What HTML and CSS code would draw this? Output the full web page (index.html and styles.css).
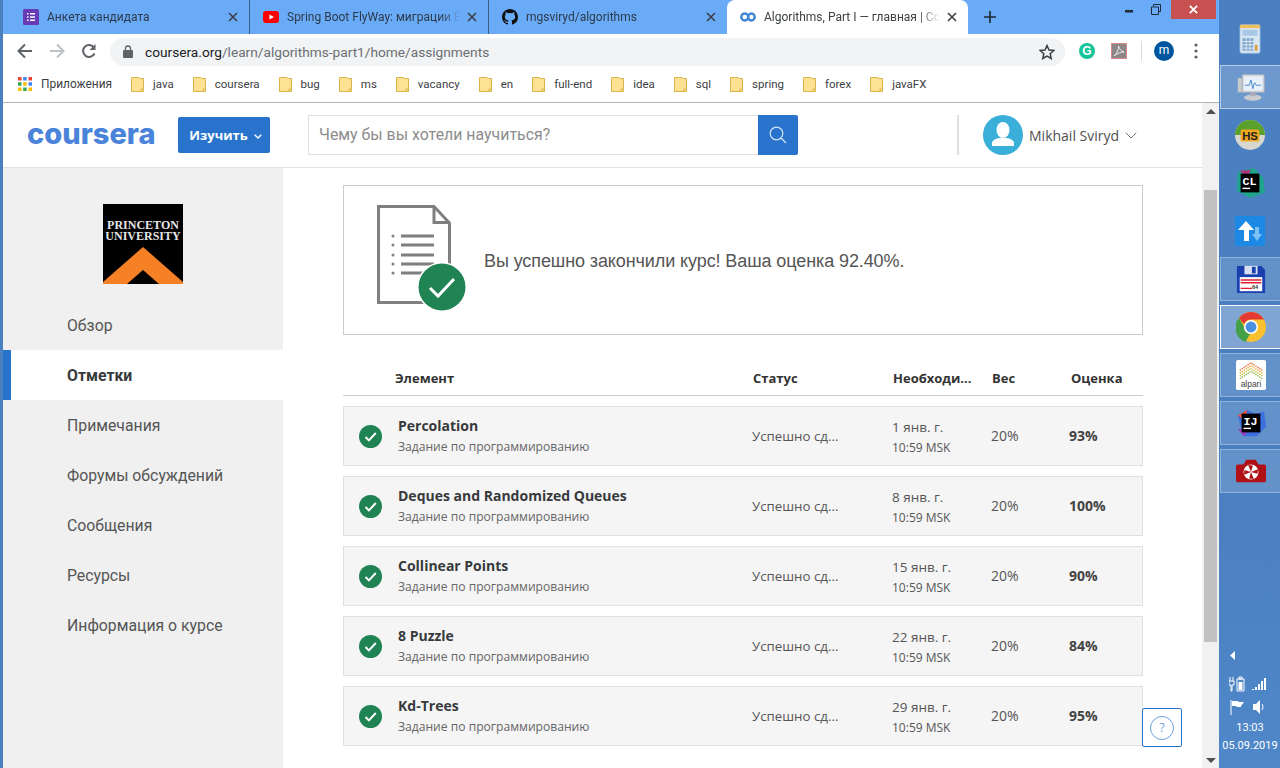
FILE: index.html
```html
<!DOCTYPE html>
<html lang="ru">
<head>
<meta charset="utf-8">
<title>Algorithms, Part I — главная | Coursera</title>
<link rel="stylesheet" href="styles.css">
</head>
<body>
<svg class="defs" width="0" height="0">
  <symbol id="folder" viewBox="0 0 13 15"><path d="M.5.5H8L8.8 1.500H12.500V14.500H.5Z" fill="#fde293" stroke="#d9b44a"/><path d="M10 14.500V12H12.500" fill="none" stroke="#d9b44a"/></symbol>
  <symbol id="check" viewBox="0 0 23 23"><circle cx="11.5" cy="11.5" r="11.5" fill="#1f8354"/><path d="M6.5 12l3.4 3.4L16.8 8" fill="none" stroke="#fff" stroke-width="2"/></symbol>
  <symbol id="x" viewBox="0 0 10 10"><path d="M1 1l8 8M9 1l-8 8" stroke="#3c4043" stroke-width="1.6"/></symbol>
</svg>
<div class="screen">
  <div class="edge"></div>
  <div class="window">
    <div class="tabs">
      <div class="tab">
        <svg class="favicon" viewBox="0 0 16 16"><rect width="16" height="16" rx="1.5" fill="#673ab7"/><path d="M4 4h1.5v1.5H4zM7 4h5v1.5H7zM4 7.2h1.5v1.5H4zM7 7.2h5v1.5H7zM4 10.4h1.5v1.5H4zM7 10.4h5v1.5H7z" fill="#fff"/></svg>
        <span class="tab-title">Анкета кандидата</span>
        <svg class="tab-x"><use href="#x"/></svg>
      </div>
      <div class="tab sep">
        <svg class="favicon" viewBox="0 0 16 16"><rect y="2" width="16" height="12" rx="3" fill="#f00"/><path d="M6.4 5.4v5.2L11 8z" fill="#fff"/></svg>
        <span class="tab-title">Spring Boot FlyWay: миграции БД</span>
        <svg class="tab-x"><use href="#x"/></svg>
      </div>
      <div class="tab sep">
        <svg class="favicon" viewBox="0 0 16 16"><path fill="#111" d="M8 0C3.58 0 0 3.58 0 8c0 3.54 2.29 6.53 5.47 7.59.4.07.55-.17.55-.38v-1.34c-2.23.48-2.7-1.07-2.7-1.07-.36-.93-.89-1.17-.89-1.17-.73-.5.05-.49.05-.49.8.06 1.23.83 1.23.83.71 1.22 1.87.87 2.33.66.07-.52.28-.87.5-1.07-1.78-.2-3.64-.89-3.64-3.95 0-.87.31-1.59.82-2.15-.08-.2-.36-1.02.08-2.12 0 0 .67-.21 2.2.82a7.6 7.6 0 0 1 4 0c1.53-1.04 2.2-.82 2.2-.82.44 1.1.16 1.92.08 2.12.51.56.82 1.27.82 2.15 0 3.07-1.87 3.75-3.65 3.95.29.25.54.73.54 1.48v2.2c0 .21.15.46.55.38A8 8 0 0 0 16 8c0-4.42-3.58-8-8-8z"/></svg>
        <span class="tab-title">mgsviryd/algorithms</span>
        <svg class="tab-x"><use href="#x"/></svg>
      </div>
      <div class="tab active">
        <svg class="favicon" viewBox="0 0 16 16"><path d="M5 4.5a3.5 3.5 0 1 0 0 7c2.5 0 3.5-2 3.5-3.5S9.500 4.500 11.500 4.500a3.500 3.500 0 1 1 0 7c-2 0-3-2-3-3.500S7.500 4.500 5 4.500z" fill="none" stroke="#3f86d8" stroke-width="2.400" transform="translate(-.25)"/></svg>
        <span class="tab-title">Algorithms, Part I — главная | Coursera</span>
        <svg class="tab-x"><use href="#x"/></svg>
      </div>
      <svg class="new-tab" viewBox="0 0 12 12"><path d="M6 0v12M0 6h12" stroke="#1f2a38" stroke-width="1.700"/></svg>
      <div class="win-controls">
        <svg class="win-min" viewBox="0 0 8 3"><rect width="8" height="2.500" fill="#1f2a38"/></svg>
        <svg class="win-restore" viewBox="0 0 10 11"><path d="M2.500 2.500V.5h7v7h-2M.5 3h7v7.500h-7z" fill="none" stroke="#1f2a38"/></svg>
        <div class="win-close"><svg viewBox="0 0 10 10"><path d="M1 1l8 8M9 1l-8 8" stroke="#fff" stroke-width="2"/></svg></div>
      </div>
    </div>
    <div class="toolbar">
      <svg class="nav" viewBox="0 0 16 16"><path d="M15 8H2M8 1.500L1.500 8 8 14.500" fill="none" stroke="#5f6368" stroke-width="2"/></svg>
      <svg class="nav" viewBox="0 0 16 16"><path d="M1 8h13M8 1.500L14.500 8 8 14.500" fill="none" stroke="#bdc1c6" stroke-width="2"/></svg>
      <svg class="nav" viewBox="0 0 16 16"><path d="M13.500 10.500A6 6 0 1 1 13 4.500" fill="none" stroke="#5f6368" stroke-width="2"/><path d="M14.500 1v6h-6z" fill="#5f6368"/></svg>
      <div class="omnibox">
        <svg class="lock" viewBox="0 0 10 13"><path d="M2.500 6V3.500a2.500 2.500 0 0 1 5 0V6" fill="none" stroke="#5f6368" stroke-width="1.300"/><rect y="5" width="10" height="8" rx="1" fill="#5f6368"/></svg>
        <span class="url"><span class="host">coursera.org</span>/learn/algorithms-part1/home/assignments</span>
        <svg class="star" viewBox="0 0 16 16"><path d="M8 1.500l2 4.500 4.800.5-3.600 3.200 1 4.800L8 12.100l-4.200 2.400 1-4.800L1.200 6.500 6 6z" fill="none" stroke="#3c4043" stroke-width="1.500"/></svg>
      </div>
      <div class="ext-grammarly">G</div>
      <svg class="ext-pdf" viewBox="0 0 16 16"><rect x=".5" y=".5" width="15" height="15" fill="#8c8686" stroke="#d88"/><path d="M3 13C6 10 8 6 7.500 3c1 3 2.500 5 5.500 6-3 0-6 1-10 4z" fill="none" stroke="#eee"/></svg>
      <div class="tool-divider"></div>
      <div class="profile">m</div>
      <svg class="kebab" viewBox="0 0 4 16"><circle cx="2" cy="2" r="1.600" fill="#5f6368"/><circle cx="2" cy="8" r="1.600" fill="#5f6368"/><circle cx="2" cy="14" r="1.600" fill="#5f6368"/></svg>
    </div>
    <div class="bookmarks">
      <div class="bm-apps">
        <svg class="apps" viewBox="0 0 14 14"><g><rect width="3.500" height="3.500" fill="#ea4335"/><rect x="5.200" width="3.500" height="3.500" fill="#4285f4"/><rect x="10.500" width="3.500" height="3.500" fill="#ea4335"/><rect y="5.200" width="3.500" height="3.500" fill="#34a853"/><rect x="5.200" y="5.200" width="3.500" height="3.500" fill="#fbbc04"/><rect x="10.500" y="5.200" width="3.500" height="3.500" fill="#4285f4"/><rect y="10.500" width="3.500" height="3.500" fill="#fbbc04"/><rect x="5.200" y="10.500" width="3.500" height="3.500" fill="#34a853"/><rect x="10.500" y="10.500" width="3.500" height="3.500" fill="#fbbc04"/></g></svg>
        <span>Приложения</span>
      </div>
      <div class="bm"><svg class="folder"><use href="#folder"/></svg><span>java</span></div>
      <div class="bm"><svg class="folder"><use href="#folder"/></svg><span>coursera</span></div>
      <div class="bm"><svg class="folder"><use href="#folder"/></svg><span>bug</span></div>
      <div class="bm"><svg class="folder"><use href="#folder"/></svg><span>ms</span></div>
      <div class="bm"><svg class="folder"><use href="#folder"/></svg><span>vacancy</span></div>
      <div class="bm"><svg class="folder"><use href="#folder"/></svg><span>en</span></div>
      <div class="bm"><svg class="folder"><use href="#folder"/></svg><span>full-end</span></div>
      <div class="bm"><svg class="folder"><use href="#folder"/></svg><span>idea</span></div>
      <div class="bm"><svg class="folder"><use href="#folder"/></svg><span>sql</span></div>
      <div class="bm"><svg class="folder"><use href="#folder"/></svg><span>spring</span></div>
      <div class="bm"><svg class="folder"><use href="#folder"/></svg><span>forex</span></div>
      <div class="bm"><svg class="folder"><use href="#folder"/></svg><span>javaFX</span></div>
    </div>
    <div class="page">
      <div class="page-main">
        <header class="site-header">
          <div class="logo">coursera</div>
          <button class="explore">Изучить <svg viewBox="0 0 8 5"><path d="M.7.7L4 4l3.300-3.300" fill="none" stroke="#fff" stroke-width="1.400"/></svg></button>
          <div class="search">
            <div class="search-input">Чему бы вы хотели научиться?</div>
            <div class="search-btn"><svg viewBox="0 0 18 18"><circle cx="7.500" cy="7.500" r="6.300" fill="none" stroke="#d5e4f7" stroke-width="1.200"/><path d="M12 12l5 5" stroke="#d5e4f7" stroke-width="1.200"/></svg></div>
          </div>
          <div class="header-divider"></div>
          <div class="user">
            <svg class="user-pic" viewBox="0 0 40 40"><circle cx="20" cy="20" r="20" fill="#3aafda"/><ellipse cx="20" cy="15" rx="6.500" ry="8" fill="#fff"/><path d="M9 31v-3c0-3 5-4.500 7-5h8c2 .5 7 2 7 5v3z" fill="#fff"/></svg>
            <span class="user-name">Mikhail Sviryd</span>
            <svg class="user-caret" viewBox="0 0 12 7"><path d="M.7.7L6 6 11.300.7" fill="none" stroke="#777" stroke-width="1"/></svg>
          </div>
        </header>
        <div class="course">
          <nav class="sidebar">
            <div class="uni-logo">
              <div class="uni-name">PRINCETON<br>UNIVERSITY</div>
              <svg class="uni-mark" viewBox="0 0 80 37"><path d="M0 35L40 0l40 35v2H56L40 23 24 37H0z" fill="#f58025"/></svg>
            </div>
            <a class="nav-item">Обзор</a>
            <a class="nav-item current">Отметки</a>
            <a class="nav-item">Примечания</a>
            <a class="nav-item">Форумы обсуждений</a>
            <a class="nav-item">Сообщения</a>
            <a class="nav-item">Ресурсы</a>
            <a class="nav-item">Информация о курсе</a>
          </nav>
          <main class="content">
            <section class="result">
              <svg class="result-icon" viewBox="0 0 90 107">
                <path d="M2.500 1.500H58L73.500 18V97.500H2.500Z" fill="#fff" stroke="#7f7f7f" stroke-width="3"/>
                <path d="M58 1.500V17.500H73.500" fill="none" stroke="#7f7f7f" stroke-width="3"/>
                <g fill="#7f7f7f"><circle cx="17" cy="31" r="1.500"/><circle cx="17" cy="40" r="1.500"/><circle cx="17" cy="50" r="1.500"/><circle cx="17" cy="59" r="1.500"/><circle cx="17" cy="68" r="1.500"/>
                <rect x="25" y="29.500" width="33" height="3"/><rect x="25" y="38.500" width="33" height="3"/><rect x="25" y="48.500" width="33" height="3"/><rect x="25" y="57.500" width="33" height="3"/><rect x="25" y="66.500" width="33" height="3"/></g>
                <circle cx="66" cy="82" r="25" fill="#fff"/><circle cx="66" cy="82" r="23.500" fill="#1f8354"/>
                <path d="M54 83l8 8 16-17" fill="none" stroke="#fff" stroke-width="3"/>
              </svg>
              <p class="result-text">Вы успешно закончили курс! Ваша оценка 92.40%.</p>
            </section>
            <div class="table-head">
              <span class="th-item">Элемент</span>
              <span>Статус</span>
              <span>Необходи...</span>
              <span>Вес</span>
              <span>Оценка</span>
            </div>
            <div class="rows">
              <div class="row">
                <div class="cell-item"><svg class="row-check"><use href="#check"/></svg><div><div class="item-title">Percolation</div><div class="item-sub">Задание по программированию</div></div></div>
                <div class="cell-status">Успешно сд...</div>
                <div class="cell-date"><div class="date-day">1 янв. г.</div><div class="date-time">10:59 MSK</div></div>
                <div class="cell-weight">20%</div>
                <div class="cell-grade">93%</div>
              </div>
              <div class="row">
                <div class="cell-item"><svg class="row-check"><use href="#check"/></svg><div><div class="item-title">Deques and Randomized Queues</div><div class="item-sub">Задание по программированию</div></div></div>
                <div class="cell-status">Успешно сд...</div>
                <div class="cell-date"><div class="date-day">8 янв. г.</div><div class="date-time">10:59 MSK</div></div>
                <div class="cell-weight">20%</div>
                <div class="cell-grade">100%</div>
              </div>
              <div class="row">
                <div class="cell-item"><svg class="row-check"><use href="#check"/></svg><div><div class="item-title">Collinear Points</div><div class="item-sub">Задание по программированию</div></div></div>
                <div class="cell-status">Успешно сд...</div>
                <div class="cell-date"><div class="date-day">15 янв. г.</div><div class="date-time">10:59 MSK</div></div>
                <div class="cell-weight">20%</div>
                <div class="cell-grade">90%</div>
              </div>
              <div class="row">
                <div class="cell-item"><svg class="row-check"><use href="#check"/></svg><div><div class="item-title">8 Puzzle</div><div class="item-sub">Задание по программированию</div></div></div>
                <div class="cell-status">Успешно сд...</div>
                <div class="cell-date"><div class="date-day">22 янв. г.</div><div class="date-time">10:59 MSK</div></div>
                <div class="cell-weight">20%</div>
                <div class="cell-grade">84%</div>
              </div>
              <div class="row">
                <div class="cell-item"><svg class="row-check"><use href="#check"/></svg><div><div class="item-title">Kd-Trees</div><div class="item-sub">Задание по программированию</div></div></div>
                <div class="cell-status">Успешно сд...</div>
                <div class="cell-date"><div class="date-day">29 янв. г.</div><div class="date-time">10:59 MSK</div></div>
                <div class="cell-weight">20%</div>
                <div class="cell-grade">95%</div>
              </div>
            </div>
          </main>
        </div>
        <div class="help"><div class="help-ring">?</div></div>
      </div>
      <div class="scrollbar">
        <div class="sb-up"></div>
        <div class="sb-thumb"></div>
        <div class="sb-down"></div>
      </div>
    </div>
  </div>
  <aside class="taskbar">
    <div class="pins">
      <div class="pin">
        <svg viewBox="0 0 30 36"><rect x="3" y="1" width="24" height="34" rx="2" fill="#d8e6f3" stroke="#9fc0dc"/><rect x="3" y="1" width="24" height="4" fill="#f0c060"/><rect x="6" y="7" width="18" height="7" fill="#a8c8e8"/><path d="M6 17h14v15H6z" fill="#7fa8cc"/><path d="M10.500 17v15M15 17v15M19.500 17v15M6 21h14M6 25h14M6 29h14" stroke="#e8f0f8"/><rect x="21" y="25" width="3" height="7" fill="#e09a30"/></svg>
      </div>
      <div class="pin hl">
        <svg viewBox="0 0 32 34"><rect x="1" y="7" width="5" height="16" fill="#c8ccc8"/><rect x="6" y="3" width="25" height="20" rx="1" fill="#d6dde2" stroke="#aab"/><rect x="8" y="5" width="21" height="16" fill="#e8f1fa"/><path d="M9 15h5l2-6 2 10 2-7 2 3h5" fill="none" stroke="#3a7fc0"/><ellipse cx="18" cy="29" rx="10" ry="3.500" fill="#c8ccd0"/><rect x="15" y="23" width="6" height="4" fill="#aab"/></svg>
      </div>
      <div class="pin">
        <svg viewBox="0 0 32 32"><circle cx="16" cy="16" r="16" fill="#d8d8d0"/><path d="M0 16a16 16 0 0 1 32 0z" fill="#5aa02c"/><rect x="6" y="10" width="20" height="13" rx="2" fill="#f0a820"/><text x="16" y="21" class="hs-text">HS</text></svg>
      </div>
      <div class="pin">
        <svg viewBox="0 0 32 32"><path d="M3 4L20 0l10 10 2 16-16 6L2 24z" fill="#1fa38a"/><path d="M5 3l12-1-4 8z" fill="#b0317e"/><rect x="6" y="6" width="20" height="20" fill="#000"/><text x="8" y="18" class="ide-text">CL</text><rect x="8" y="21" width="8" height="1.500" fill="#fff"/></svg>
      </div>
      <div class="pin">
        <svg viewBox="0 0 30 30"><rect width="30" height="30" rx="1" fill="#1e88e5"/><path d="M11 5l8 9h-5v11H9V14H3z" fill="#fff"/><path d="M22 25l-5-7h3v-7h4v7h3z" fill="#7cc0f5"/></svg>
      </div>
      <div class="pin boxed">
        <svg viewBox="0 0 32 32"><path d="M1 2h26l4 4v25H1z" fill="#1c3fb0"/><rect x="9" y="2" width="14" height="9" fill="#d8e0f0"/><rect x="17" y="3" width="4" height="7" fill="#1c3fb0"/><rect x="4" y="14" width="24" height="15" fill="#fff"/><path d="M5 17h22M5 20h22M5 26h12" stroke="#e02030" stroke-width="1.500"/><text x="17" y="27" class="fd-text">64</text></svg>
      </div>
      <div class="pin bright">
        <svg viewBox="0 0 32 32"><circle cx="16" cy="16" r="16" fill="#fbc02d"/><path d="M16 0a16 16 0 0 1 13.900 8H16a8 8 0 0 0-7.500 5L3.200 6.500A16 16 0 0 1 16 0z" fill="#e53935"/><path d="M3.200 6.500l5.800 10a8 8 0 0 0 6 7l-5 8.500A16 16 0 0 1 3.200 6.500z" fill="#43a047"/><circle cx="16" cy="16" r="7.500" fill="#fff"/><circle cx="16" cy="16" r="5.800" fill="#4a90e2"/></svg>
      </div>
      <div class="pin boxed">
        <svg viewBox="0 0 32 32"><rect width="32" height="32" rx="2" fill="#fff"/><path d="M4 11L16 3l12 8" fill="none" stroke="#e0703c" stroke-width="1.500" stroke-dasharray="1.500 1"/><path d="M4 14L16 6l12 8" fill="none" stroke="#e8a83c" stroke-width="1.500" stroke-dasharray="1.500 1"/><path d="M4 17L16 9l12 8" fill="none" stroke="#c8c040" stroke-width="1.500" stroke-dasharray="1.500 1"/><path d="M4 20L16 12l12 8" fill="none" stroke="#8ab84a" stroke-width="1.500" stroke-dasharray="1.500 1"/><text x="16" y="29" class="alpari-text">alpari</text></svg>
      </div>
      <div class="pin boxed">
        <svg viewBox="0 0 32 32"><path d="M2 8l10-6 8 4 10-2 2 16-10 10L8 30z" fill="#3b6fe0"/><path d="M2 8l10-6-2 12z" fill="#f0563f"/><path d="M2 22l6 8 6-6z" fill="#9c3dbf"/><rect x="6" y="6" width="20" height="20" fill="#000"/><text x="8" y="18" class="ide-text">IJ</text><rect x="8" y="21" width="8" height="1.500" fill="#fff"/></svg>
      </div>
      <div class="pin boxed">
        <svg viewBox="0 0 32 26"><path d="M2 6h6l3-5h10l3 5h6a2 2 0 0 1 2 2v15a2 2 0 0 1-2 2H2a2 2 0 0 1-2-2V8a2 2 0 0 1 2-2z" fill="#b01116"/><circle cx="16" cy="14" r="8" fill="#fff"/><path d="M16 14L13 6.500 18 7zM16 14l7.500-3-.5 5zM16 14l3 7.500-5-.5zM16 14l-7.500 3 .5-5z" fill="#b01116"/></svg>
      </div>
    </div>
    <div class="tray">
      <svg class="tray-arrow" viewBox="0 0 5 9"><path d="M5 0v9L0 4.500z" fill="#fff"/></svg>
      <div class="tray-icons">
        <svg viewBox="0 0 16 16"><path d="M1 1v4M4 1v4M0 5h5v4H3v6H2V9H0zM8 3h7v12H8zM10 1h3v2h-3z" fill="none" stroke="#fff"/><rect x="9.500" y="6" width="4" height="8" fill="#fff"/></svg>
        <svg viewBox="0 0 16 16"><path d="M1 13h2v1H1zM4 11h2v3H4zM7 8h2v6H7zM10 5h2v9h-2zM13 2h2v12h-2z" fill="#fff"/></svg>
        <svg viewBox="0 0 16 16"><path d="M2 1v15" stroke="#fff"/><path d="M3 2h6l1 1h5l-3 4 0 1H8L7 7H3z" fill="#fff"/></svg>
        <svg viewBox="0 0 16 16"><path d="M2 5h3l4-4v14l-4-4H2z" fill="#fff"/><path d="M11 5a5 5 0 0 1 0 6" fill="none" stroke="#fff"/></svg>
      </div>
      <div class="clock">13:03</div>
      <div class="clock">05.09.2019</div>
    </div>
  </aside>
</div>
</body>
</html>
```

FILE: styles.css
```css
* { box-sizing: border-box; }
html, body { margin: 0; height: 100%; overflow: hidden; }
body { font-family: "Open Sans", "Noto Sans", sans-serif; color: #333; background: #fff; }
.defs { position: absolute; }
svg { display: block; flex: none; }

.screen { display: flex; width: 1280px; height: 768px; }
.edge { width: 3px; background: #4a7fc0; flex: none; }
.window { width: 1216px; flex: none; display: flex; flex-direction: column; }

/* tab strip */
.tabs { height: 34px; flex: none; display: flex; align-items: stretch; background: #6aabf7; padding-left: 7px; }
.tab { width: 239px; display: flex; align-items: center; padding: 0 11px 0 13px; font: 12px Roboto, sans-serif; color: #2d3a4a; flex: none; }
.tab.sep { border-left: 1px solid #3e5f85; }
.tab.active { background: #fff; border-radius: 8px 8px 0 0; color: #3c4043; width: 241px; }
.favicon { width: 16px; height: 16px; margin-right: 8px; }
.tab-title { flex: 1; overflow: hidden; white-space: nowrap; -webkit-mask-image: linear-gradient(to right, #000 88%, transparent); mask-image: linear-gradient(to right, #000 88%, transparent); }
.tab-x { width: 10px; height: 10px; margin-left: 7px; }
.new-tab { width: 12px; height: 12px; margin: 11px 0 0 16px; }
.win-controls { margin-left: auto; display: flex; align-items: flex-start; }
.win-min { width: 8px; height: 3px; margin: 10px 18px 0 0; }
.win-restore { width: 10px; height: 11px; margin: 4px 10px 0 0; }
.win-close { width: 45px; height: 19px; background: #c75050; display: flex; align-items: center; justify-content: center; margin-right: 3px; }
.win-close svg { width: 9px; height: 9px; }

/* toolbar */
.toolbar { height: 34px; flex: none; display: flex; align-items: center; padding: 0 0 0 14px; background: #fff; }
.nav { width: 16px; height: 16px; margin-right: 16px; }
.omnibox { width: 955px; height: 28px; margin-left: -3px; background: #f1f3f4; border-radius: 14px; display: flex; align-items: center; padding: 0 10px 0 13px; margin-top: 1px; }
.lock { width: 10px; height: 13px; margin-right: 12px; }
.url { color: #6b6f73; font: 13.700px Roboto, sans-serif; flex: 1; white-space: nowrap; }
.host { color: #202124; }
.star { width: 16px; height: 16px; }
.ext-grammarly { width: 16px; height: 16px; margin-left: 14px; border-radius: 50%; background: #15c39a; color: #fff; font: 700 12px/16px "Liberation Sans", sans-serif; text-align: center; }
.ext-pdf { width: 16px; height: 16px; margin-left: 16px; }
.tool-divider { width: 1px; height: 20px; background: #dadce0; margin-left: 14px; }
.profile { width: 20px; height: 20px; margin-left: 12px; border-radius: 50%; background: #00569e; color: #fff; font: 12px/18px Roboto, sans-serif; text-align: center; }
.kebab { width: 4px; height: 16px; margin-left: 20px; }

/* bookmarks */
.bookmarks { height: 35px; flex: none; display: flex; align-items: center; gap: 19px; padding: 0 0 2px 15px; background: #fff; border-bottom: 1px solid #b4b4b4; font: 11.500px Roboto, sans-serif; color: #3c4043; }
.bm-apps { display: flex; align-items: center; gap: 9px; font-size: 11.900px; }
.apps { width: 14px; height: 14px; }
.bm { display: flex; align-items: center; gap: 9px; }
.folder { width: 13px; height: 15px; }

/* page */
.page { flex: 1; min-height: 0; display: flex; }
.page-main { width: 1199px; flex: none; display: flex; flex-direction: column; position: relative; overflow: hidden; }
.scrollbar { width: 17px; background: #f1f1f1; display: flex; flex-direction: column; align-items: center; padding: 6px 2px 5px 2px; }
.sb-up { width: 0; height: 0; border: 5px solid transparent; border-top: 0; border-bottom: 5px solid #505050; }
.sb-thumb { width: 13px; height: 452px; background: #c1c1c1; margin-top: 76px; }
.sb-down { width: 0; height: 0; border: 5px solid transparent; border-bottom: 0; border-top: 5px solid #505050; margin-top: auto; }

/* coursera header */
.site-header { height: 65px; flex: none; display: flex; align-items: center; padding-left: 24px; border-bottom: 1px solid #e1e1e1; }
.logo { width: 127px; font: 800 29px/1 Inter, sans-serif; color: #4a84da; margin-bottom: 4px; white-space: nowrap; }
.explore { width: 92px; height: 36px; margin-left: 24px; border: 0; border-radius: 2px; background: #2a73cc; color: #fff; font: 700 13px "Open Sans", sans-serif; display: flex; align-items: center; justify-content: center; gap: 6px; padding: 0 0 0 3px; }
.explore svg { width: 8px; height: 5px; margin-top: 2px; }
.search { display: flex; margin-left: 38px; width: 490px; height: 40px; }
.search-input { flex: 1; border: 1px solid #e0e0e0; border-right: 0; padding-left: 10px; font: 15.900px/38px Roboto, sans-serif; color: #8c8c8c; }
.search-btn { width: 40px; background: #2a73cc; display: flex; align-items: center; justify-content: center; border-radius: 0 2px 2px 0; }
.search-btn svg { width: 18px; height: 18px; }
.header-divider { width: 2px; height: 40px; background: #e0e0e0; margin-left: 159px; }
.user { display: flex; align-items: center; margin-left: 24px; }
.user-pic { width: 40px; height: 40px; }
.user-name { margin-left: 6px; font: 14px "Open Sans", sans-serif; color: #505050; }
.user-caret { width: 12px; height: 7px; margin-left: 6px; }

/* course layout */
.course { flex: 1; min-height: 0; display: flex; }
.sidebar { width: 280px; flex: none; background: #f0f0f0; padding-top: 36px; display: flex; flex-direction: column; }
.uni-logo { width: 80px; height: 80px; margin: 0 0 16px 100px; background: #000; color: #e6e6e6; position: relative; flex: none; padding-top: 16px; text-align: center; font: 700 12px/11px "Liberation Serif", serif; }
.uni-mark { position: absolute; left: 0; bottom: 0; width: 80px; height: 37px; }
.nav-item { height: 50px; flex: none; display: flex; align-items: center; padding-left: 64px; font: 15.800px Roboto, sans-serif; color: #555; }
.nav-item.current { background: #fff; color: #373a3c; font-weight: 700; position: relative; }
.nav-item.current::before { content: ""; position: absolute; left: -3px; top: 0; width: 11px; height: 50px; background: #2a73cc; }

.content { width: 800px; margin-left: 60px; padding-top: 17px; flex: none; }
.result { height: 150px; border: 1px solid #ccc; display: flex; align-items: flex-start; padding: 19px 0 0 32px; }
.result-icon { width: 90px; height: 107px; }
.result-text { margin: 46px 0 0 18px; font: 18px/20px "Liberation Sans", sans-serif; letter-spacing: -.1px; color: #555; }

.table-head { height: 31px; margin-top: 30px; border-bottom: 1px solid #ccc; display: grid; grid-template-columns: 52px 358px 140px 99px 79px 1fr; font-size: 13px; font-weight: 700; line-height: 26px; color: #333; white-space: nowrap; }
.table-head span:first-child { grid-column: 2; }
.rows { margin-top: 10px; display: flex; flex-direction: column; gap: 10px; }
.row { height: 60px; border: 1px solid #e0e0e0; background: #f5f5f5; display: grid; grid-template-columns: 408px 140px 99px 78px 1fr; align-items: center; font-size: 13.300px; color: #555; white-space: nowrap; }
.cell-item { display: flex; align-items: center; padding-left: 15px; }
.row-check { width: 23px; height: 23px; margin-right: 16px; }
.item-title { font-size: 14px; font-weight: 700; color: #373a3c; line-height: 20px; }
.item-sub { font-size: 12.100px; line-height: 20px; color: #666; padding-top: 1px; }
.cell-date { padding-top: 2px; }
.date-day { font-size: 13.500px; line-height: 20px; padding-top: 1px; }
.date-time { font-size: 12px; line-height: 20px; padding-top: 1px; }
.cell-weight { font-size: 14px; padding-bottom: 1px; }
.cell-grade { font-size: 14px; font-weight: 700; color: #444; padding-bottom: 1px; }

.help { position: absolute; left: 1139px; top: 605px; width: 40px; height: 39px; background: #fff; border: 1px solid #2a73cc; border-radius: 2px; display: flex; align-items: center; justify-content: center; }
.help-ring { width: 24px; height: 24px; border: 1px solid #6a9fe0; border-radius: 50%; text-align: center; font: 12px/22px "Open Sans", sans-serif; color: #6a9fe0; }

/* windows taskbar */
.taskbar { width: 61px; flex: none; background: linear-gradient(to bottom, #4a80c2, #4a7fc0 60%, #4f87c9); display: flex; flex-direction: column; padding-left: 1px; }
.pins { padding-top: 17px; display: flex; flex-direction: column; gap: 4px; }
.pin { height: 44px; display: flex; align-items: center; justify-content: center; }
.pin svg { width: 30px; height: 30px; }
.pin.boxed, .pin.hl { border: 1px solid rgba(255,255,255,.3); background: rgba(255,255,255,.14); border-right: 0; }
.pin.hl { border-color: rgba(255,255,255,.5); background: rgba(255,255,255,.2); }
.pin.bright { border: 1px solid #fff; border-right: 0; background: rgba(255,255,255,.3); }
.hs-text { font: 700 12px "Liberation Sans", sans-serif; fill: #222; text-anchor: middle; }
.ide-text { font: 700 12.500px "Liberation Mono", monospace; fill: #fff; }
.fd-text { font: 700 6px "Liberation Sans", sans-serif; fill: #333; }
.alpari-text { font: 9px "Liberation Sans", sans-serif; fill: #444; text-anchor: middle; }
.tray { margin-top: auto; padding-bottom: 13px; color: #fff; font: 11px/18px Roboto, sans-serif; text-align: center; }
.tray-arrow { width: 5px; height: 9px; margin: 0 0 16px 10px; }
.tray-icons { display: grid; grid-template-columns: 16px 16px; gap: 7px 6px; padding-left: 9px; margin-bottom: 4px; }
.tray-icons svg { width: 16px; height: 16px; }
.clock { white-space: nowrap; }
```
